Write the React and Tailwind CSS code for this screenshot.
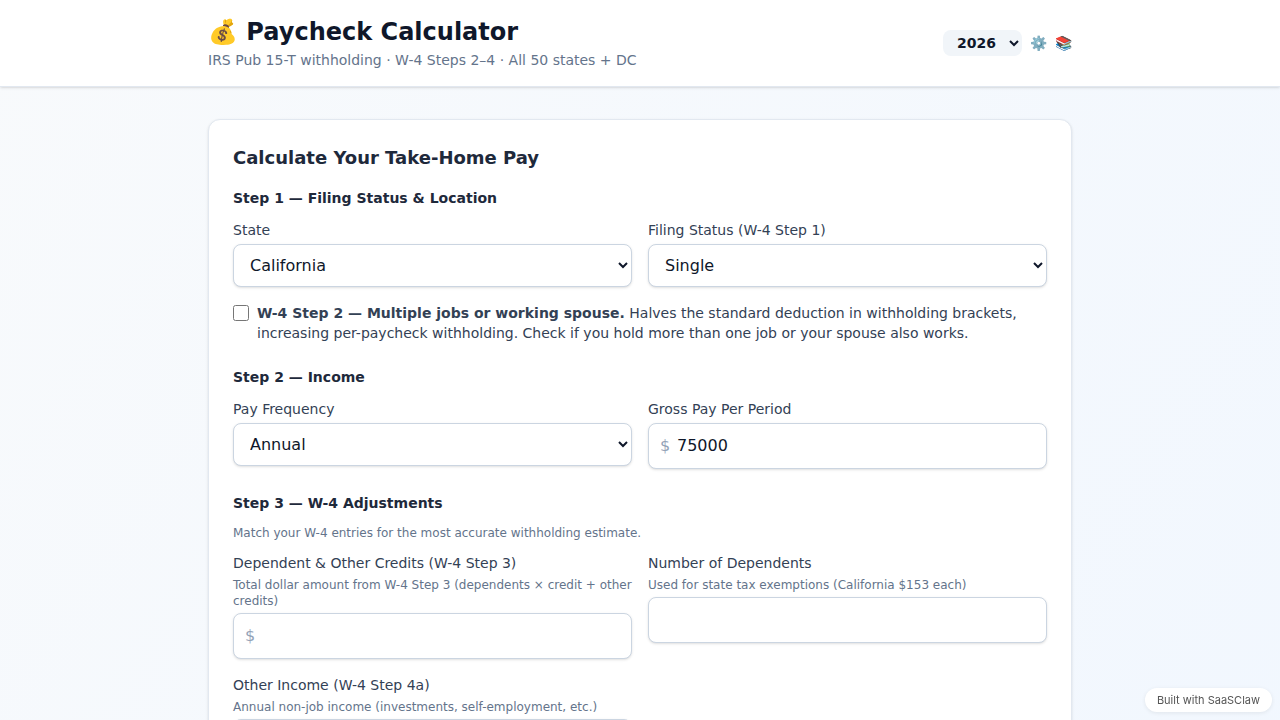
import React, { useState } from "react";

const inputClass =
  "block w-full rounded-lg border border-[#cbd5e1] bg-white px-3 py-2.5 text-base text-[#0f172a] shadow-sm focus:outline-none focus:ring-2 focus:ring-blue-500";

const Field = ({ id, label, hint, children }) => (
  <div>
    <label htmlFor={id} className="block text-sm text-[#334155] mb-1">
      {label}
    </label>
    {hint && <p className="text-xs text-[#64748b] mb-1">{hint}</p>}
    {children}
  </div>
);

const MoneyInput = ({ id, value, onChange }) => (
  <div className="relative">
    <span className="absolute inset-y-0 left-3 flex items-center text-[#94a3b8]">$</span>
    <input
      id={id}
      type="text"
      inputMode="decimal"
      value={value}
      onChange={(e) => onChange(e.target.value)}
      className={`${inputClass} pl-7`}
    />
  </div>
);

const StepTitle = ({ children }) => (
  <h3 className="text-sm font-bold text-[#1e293b] mb-3">{children}</h3>
);

const Header = () => {
  const [year, setYear] = useState("2026");

  return (
    <header className="bg-white border-b border-[#e2e8f0] shadow-sm">
      <div className="max-w-4xl mx-auto px-4 py-4 flex items-center justify-between">
        <div>
          <h1 className="text-2xl font-bold text-[#0f172a]">💰 Paycheck Calculator</h1>
          <p className="text-sm text-[#64748b] mt-0.5">
            IRS Pub 15-T withholding · W-4 Steps 2–4 · All 50 states + DC
          </p>
        </div>
        <div className="flex items-center gap-2 text-sm">
          <select
            aria-label="Tax year"
            value={year}
            onChange={(e) => setYear(e.target.value)}
            className="rounded-lg bg-[#f1f5f9] px-2.5 py-1 text-sm font-bold text-[#0f172a]"
          >
            <option>2026</option>
            <option>2025</option>
          </select>
          <button type="button" aria-label="Settings">⚙️</button>
          <button type="button" aria-label="Resources">📚</button>
        </div>
      </div>
    </header>
  );
};

const App = () => {
  const [state, setState] = useState("California");
  const [status, setStatus] = useState("Single");
  const [multipleJobs, setMultipleJobs] = useState(false);
  const [frequency, setFrequency] = useState("Annual");
  const [gross, setGross] = useState("75000");
  const [credits, setCredits] = useState("");
  const [dependents, setDependents] = useState("");
  const [otherIncome, setOtherIncome] = useState("");

  return (
    <div className="min-h-[250vh] bg-linear-to-br from-[#f8fafc] to-[#eff6ff] font-['DejaVu_Sans',sans-serif]">
      <Header />

      <main className="max-w-4xl mx-auto px-4 py-8">
        <form className="bg-white rounded-xl border border-[#e2e8f0] shadow-sm p-6">
          <h2 className="text-lg font-bold text-[#1e293b] mb-4">Calculate Your Take-Home Pay</h2>

          <section className="mb-6">
            <StepTitle>Step 1 — Filing Status &amp; Location</StepTitle>
            <div className="grid grid-cols-1 sm:grid-cols-2 gap-4">
              <Field id="state" label="State">
                <select id="state" value={state} onChange={(e) => setState(e.target.value)} className={inputClass}>
                  <option>California</option>
                  <option>New York</option>
                  <option>Texas</option>
                </select>
              </Field>
              <Field id="status" label="Filing Status (W-4 Step 1)">
                <select id="status" value={status} onChange={(e) => setStatus(e.target.value)} className={inputClass}>
                  <option>Single</option>
                  <option>Married Filing Jointly</option>
                  <option>Head of Household</option>
                </select>
              </Field>
            </div>
            <label className="mt-4 flex items-start gap-2 text-sm text-[#334155]">
              <input
                type="checkbox"
                checked={multipleJobs}
                onChange={(e) => setMultipleJobs(e.target.checked)}
                className="mt-0.5 size-4 shrink-0"
              />
              <span>
                <strong>W-4 Step 2 — Multiple jobs or working spouse.</strong> Halves the standard deduction in
                withholding brackets, increasing per-paycheck withholding. Check if you hold more than one job or
                your spouse also works.
              </span>
            </label>
          </section>

          <section className="mb-6">
            <StepTitle>Step 2 — Income</StepTitle>
            <div className="grid grid-cols-1 sm:grid-cols-2 gap-4">
              <Field id="frequency" label="Pay Frequency">
                <select
                  id="frequency"
                  value={frequency}
                  onChange={(e) => setFrequency(e.target.value)}
                  className={inputClass}
                >
                  <option>Annual</option>
                  <option>Monthly</option>
                  <option>Weekly</option>
                </select>
              </Field>
              <Field id="gross" label="Gross Pay Per Period">
                <MoneyInput id="gross" value={gross} onChange={setGross} />
              </Field>
            </div>
          </section>

          <section>
            <StepTitle>Step 3 — W-4 Adjustments</StepTitle>
            <p className="text-xs text-[#64748b] mb-3">
              Match your W-4 entries for the most accurate withholding estimate.
            </p>
            <div className="grid grid-cols-1 sm:grid-cols-2 gap-4">
              <Field
                id="credits"
                label="Dependent &amp; Other Credits (W-4 Step 3)"
                hint="Total dollar amount from W-4 Step 3 (dependents × credit + other credits)"
              >
                <MoneyInput id="credits" value={credits} onChange={setCredits} />
              </Field>
              <Field
                id="dependents"
                label="Number of Dependents"
                hint="Used for state tax exemptions (California $153 each)"
              >
                <input
                  id="dependents"
                  type="text"
                  inputMode="numeric"
                  value={dependents}
                  onChange={(e) => setDependents(e.target.value)}
                  className={inputClass}
                />
              </Field>
              <Field
                id="other-income"
                label="Other Income (W-4 Step 4a)"
                hint="Annual non-job income (investments, self-employment, etc.)"
              >
                <MoneyInput id="other-income" value={otherIncome} onChange={setOtherIncome} />
              </Field>
            </div>
          </section>
        </form>
      </main>

      <a
        href="#"
        className="fixed right-2 bottom-2 rounded-full bg-white px-3 py-1 text-[11px] leading-4 text-[#555555] shadow-[0_1px_4px_rgba(0,0,0,0.08)] font-[Inter,sans-serif]"
      >
        Built with SaaSClaw
      </a>
    </div>
  );
};

export default App;
